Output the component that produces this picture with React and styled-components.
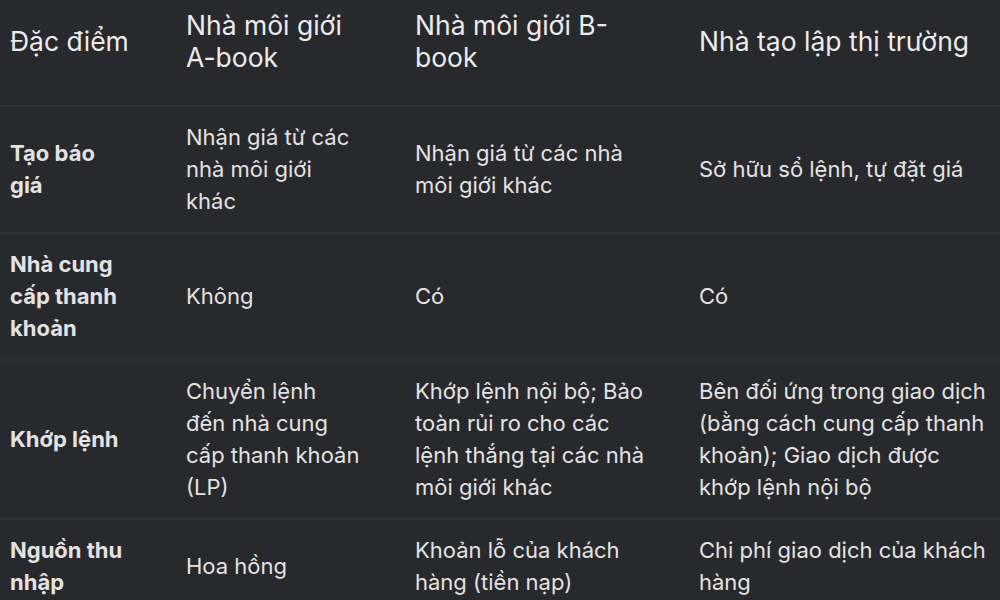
import React from "react";
import styled, { createGlobalStyle } from "styled-components";

const Global = createGlobalStyle`
  html, body { margin: 0; padding: 0; background: #28292c; }
  body { font-family: Inter, Roboto, "Noto Sans", sans-serif; -webkit-font-smoothing: antialiased; }
`;

const Page = styled.div`
  width: 1000px;
  height: 600px;
  overflow: hidden;
  background: #28292c;
`;

const Table = styled.div`
  display: grid;
  grid-template-columns: 176px 229px 284px 1fr;
`;

const Cell = styled.div`
  display: flex;
  flex-direction: column;
  justify-content: center;
  padding: ${(p) => (p.$head ? "9px 10px 32px" : "14px 10px 15px")};
  border-bottom: 2px solid #333438;
  color: ${(p) => (p.$head ? "#ececec" : "#e3e3e3")};
  font-size: ${(p) => (p.$head ? "26.5px" : "22px")};
  font-weight: ${(p) => (p.$bold ? 700 : 400)};
  line-height: 32px;
`;

const Line = styled.span`
  display: block;
  white-space: nowrap;
`;

const header = [
  ["Đặc điểm"],
  ["Nhà môi giới", "A-book"],
  ["Nhà môi giới B-", "book"],
  ["Nhà tạo lập thị trường"],
];

const rows = [
  [
    ["Tạo báo", "giá"],
    ["Nhận giá từ các", "nhà môi giới", "khác"],
    ["Nhận giá từ các nhà", "môi giới khác"],
    ["Sở hữu sổ lệnh, tự đặt giá"],
  ],
  [
    ["Nhà cung", "cấp thanh", "khoản"],
    ["Không"],
    ["Có"],
    ["Có"],
  ],
  [
    ["Khớp lệnh"],
    ["Chuyển lệnh", "đến nhà cung", "cấp thanh khoản", "(LP)"],
    ["Khớp lệnh nội bộ; Bảo", "toàn rủi ro cho các", "lệnh thắng tại các nhà", "môi giới khác"],
    ["Bên đối ứng trong giao dịch", "(bằng cách cung cấp thanh", "khoản); Giao dịch được", "khớp lệnh nội bộ"],
  ],
  [
    ["Nguồn thu", "nhập"],
    ["Hoa hồng"],
    ["Khoản lỗ của khách", "hàng (tiền nạp)"],
    ["Chi phí giao dịch của khách", "hàng"],
  ],
];

export default function App() {
  return (
    <Page>
      <Global />
      <Table>
        {header.map((lines, i) => (
          <Cell key={"h" + i} $head>
            {lines.map((l, j) => (
              <Line key={j}>{l}</Line>
            ))}
          </Cell>
        ))}
        {rows.map((row, r) =>
          row.map((lines, c) => (
            <Cell key={r + "-" + c} $bold={c === 0}>
              {lines.map((l, j) => (
                <Line key={j}>{l}</Line>
              ))}
            </Cell>
          ))
        )}
      </Table>
    </Page>
  );
}
